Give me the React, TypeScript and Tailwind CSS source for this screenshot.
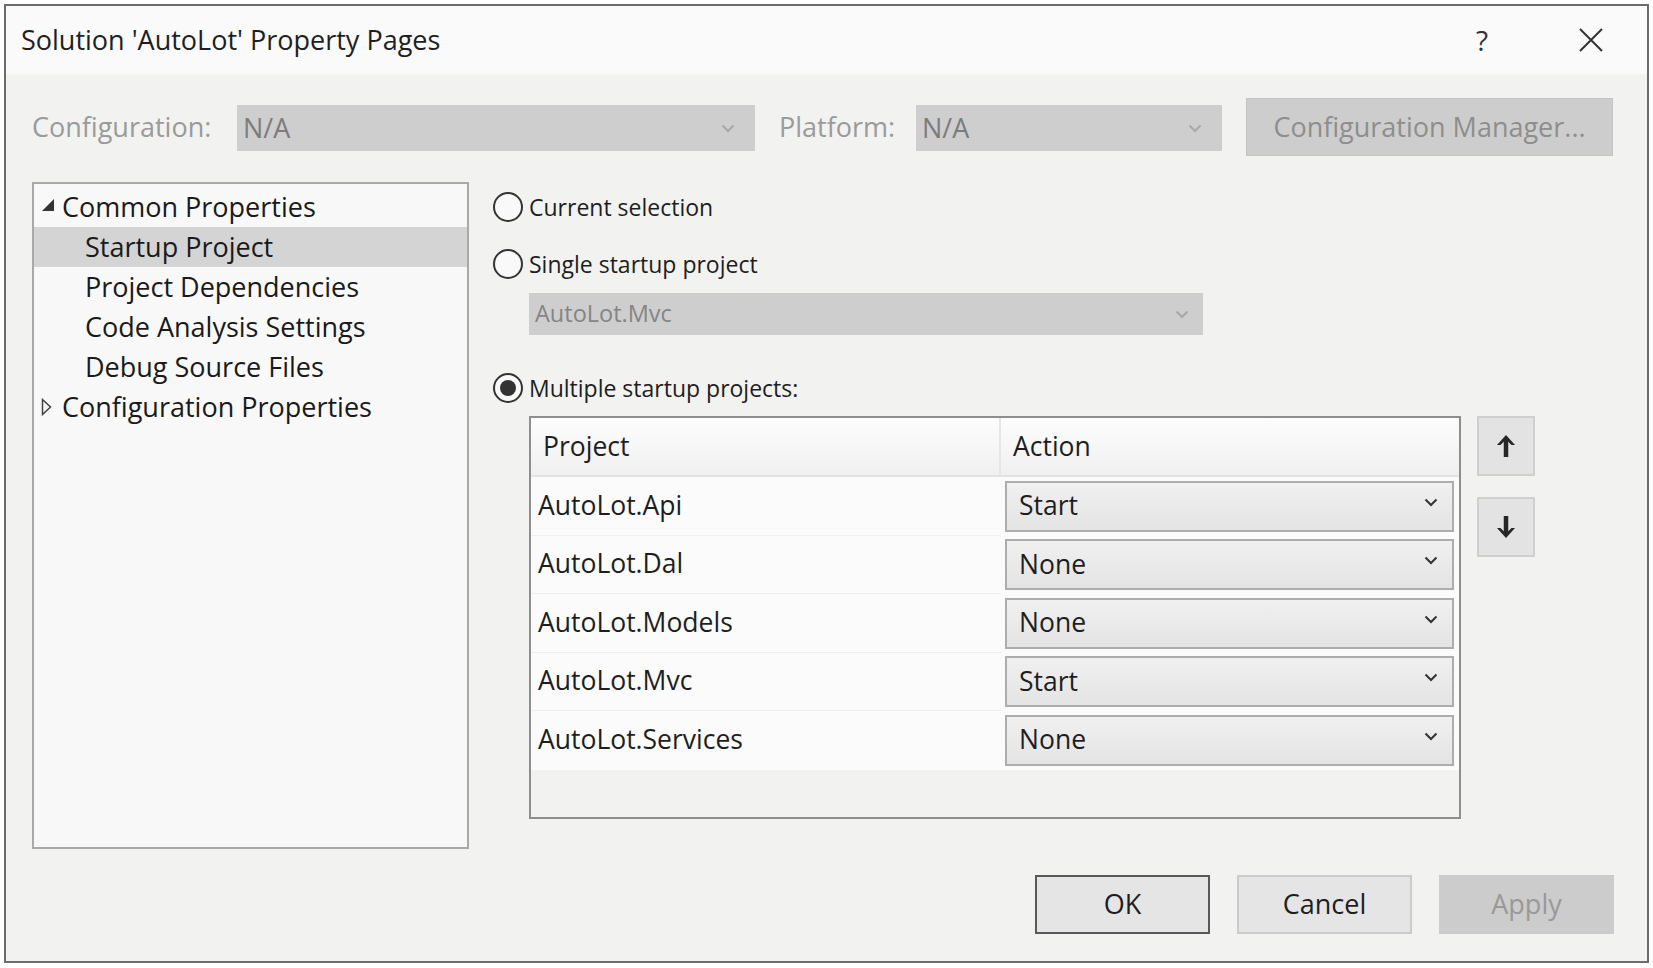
import React from 'react';

const font = { fontFamily: '"Open Sans", "Noto Sans", sans-serif' };

const Chevron = ({ className = '' }: { className?: string }) => (
  <svg width="14" height="9" viewBox="0 0 14 9" className={className}>
    <path d="M1.5 1.5 L7 7 L12.5 1.5" fill="none" stroke="currentColor" strokeWidth="2" />
  </svg>
);

const Radio = ({ checked, label }: { checked?: boolean; label: string }) => (
  <div className="flex items-center h-[36px]">
    <div className="w-[30px] h-[30px] rounded-full border-2 border-[#333] bg-[#f9f9f9] flex items-center justify-center">
      {checked && <div className="w-[16px] h-[16px] rounded-full bg-[#333]" />}
    </div>
    <span className="ml-[6px] text-[23px] text-[#1e1e1e]">{label}</span>
  </div>
);

const treeItems = [
  { label: 'Common Properties', kind: 'open' },
  { label: 'Startup Project', kind: 'child', selected: true },
  { label: 'Project Dependencies', kind: 'child' },
  { label: 'Code Analysis Settings', kind: 'child' },
  { label: 'Debug Source Files', kind: 'child' },
  { label: 'Configuration Properties', kind: 'closed' },
];

const projects = [
  { name: 'AutoLot.Api', action: 'Start' },
  { name: 'AutoLot.Dal', action: 'None' },
  { name: 'AutoLot.Models', action: 'None' },
  { name: 'AutoLot.Mvc', action: 'Start' },
  { name: 'AutoLot.Services', action: 'None' },
];

export default function App() {
  return (
    <div className="w-[1653px] h-[968px] bg-white pt-[4px] pl-[4px]" style={font}>
      <div className="w-[1645px] h-[959px] border-2 border-[#6b6b6b] bg-[#f2f2f1] flex flex-col">
        {/* Title bar */}
        <div className="h-[68px] bg-[#fafafa] flex items-center pl-[15px] shrink-0">
          <span className="text-[27px] text-[#1f1f1f]">Solution 'AutoLot' Property Pages</span>
          <span className="ml-auto text-[28px] text-[#333] w-[30px] text-center">?</span>
          <div className="ml-[79px] mr-[41px] w-[30px] h-[30px] flex items-center justify-center">
            <svg width="24" height="24" viewBox="0 0 24 24">
              <path d="M1 1 L23 23 M23 1 L1 23" stroke="#333" strokeWidth="2" fill="none" />
            </svg>
          </div>
        </div>

        {/* Configuration row */}
        <div className="flex items-center mt-[24px] pl-[26px] h-[58px]">
          <span className="w-[205px] text-[27px] text-[#9a9a9a]">Configuration:</span>
          <div className="mt-[2px] w-[518px] h-[46px] bg-[#cecece] flex items-center pl-[6px] pr-[20px]">
            <span className="text-[27px] text-[#7c7c7c]">N/A</span>
            <Chevron className="ml-auto text-[#a8a8a8]" />
          </div>
          <span className="ml-[24px] w-[137px] text-[27px] text-[#9a9a9a]">Platform:</span>
          <div className="mt-[2px] w-[306px] h-[46px] bg-[#cecece] flex items-center pl-[6px] pr-[20px]">
            <span className="text-[27px] text-[#7c7c7c]">N/A</span>
            <Chevron className="ml-auto text-[#a8a8a8]" />
          </div>
          <div className="ml-[24px] w-[367px] h-[58px] bg-[#cdcdcd] border border-[#c4c4c4] flex items-center justify-center">
            <span className="text-[27px] text-[#8e8e8e]">Configuration Manager...</span>
          </div>
        </div>

        {/* Main area */}
        <div className="flex mt-[26px] pl-[26px]">
          {/* Tree */}
          <div className="w-[437px] h-[667px] border-2 border-[#a9a9a9] bg-[#f8f8f8] pt-[3px]">
            {treeItems.map((it) => (
              <div
                key={it.label}
                className={`h-[40px] flex items-center ${it.selected ? 'bg-[#d4d4d4]' : ''}`}
              >
                {it.kind === 'child' ? (
                  <span className="pl-[51px] text-[27px] text-[#1a1a1a]">{it.label}</span>
                ) : (
                  <>
                    <span className="w-[28px] pl-[7px] flex items-center">
                      {it.kind === 'open' ? (
                        <svg width="14" height="14" viewBox="0 0 14 14" className="-mt-[4px]">
                          <path d="M13 1 L13 13 L1 13 Z" fill="#333" />
                        </svg>
                      ) : (
                        <svg width="11" height="18" viewBox="0 0 11 18">
                          <path d="M1.5 1.5 L9.5 9 L1.5 16.5 Z" fill="none" stroke="#444" strokeWidth="1.5" />
                        </svg>
                      )}
                    </span>
                    <span className="text-[27px] text-[#1a1a1a]">{it.label}</span>
                  </>
                )}
              </div>
            ))}
          </div>

          {/* Right panel */}
          <div className="ml-[24px] flex flex-col">
            <div className="mt-[7px]">
              <Radio label="Current selection" />
            </div>
            <div className="mt-[21px]">
              <Radio label="Single startup project" />
            </div>
            <div className="ml-[36px] mt-[11px] w-[674px] h-[42px] bg-[#cecece] flex items-center pl-[6px] pr-[14px]">
              <span className="text-[23.5px] text-[#858585]">AutoLot.Mvc</span>
              <Chevron className="ml-auto text-[#a8a8a8]" />
            </div>
            <div className="mt-[35px]">
              <Radio checked label="Multiple startup projects:" />
            </div>

            <div className="flex mt-[10px] ml-[36px]">
              {/* Grid */}
              <div className="w-[932px] h-[403px] border-2 border-[#8e8e8e] bg-[#f2f2f1] flex flex-col">
                <div className="h-[59px] flex bg-gradient-to-b from-[#fdfdfd] to-[#f0f0f0] border-b-2 border-[#e2e2e2]">
                  <div className="w-[470px] border-r-2 border-[#e6e6e6] flex items-center pl-[12px]">
                    <span className="text-[26.5px] text-[#1e1e1e]">Project</span>
                  </div>
                  <div className="flex-1 flex items-center pl-[12px]">
                    <span className="text-[26.5px] text-[#1e1e1e]">Action</span>
                  </div>
                </div>
                {projects.map((p, i) => (
                  <div key={p.name} className="h-[58.5px] flex">
                    <div
                      className={`w-[470px] flex items-center pl-[7px] bg-[#fbfbfb] ${i < projects.length - 1 ? 'border-b border-[#efefef]' : ''}`}
                    >
                      <span className="text-[26.5px] text-[#1e1e1e]">{p.name}</span>
                    </div>
                    <div className="flex-1 bg-[#fbfbfb] flex items-center pl-[4px] pr-[5px]">
                      <div className="w-full h-[51px] border-2 border-[#adadad] bg-gradient-to-b from-[#f0f0f0] to-[#e4e4e4] flex items-center pl-[12px] pr-[14px]">
                        <span className="text-[26.5px] text-[#1e1e1e]">{p.action}</span>
                        <Chevron className="ml-auto -mt-[8px] text-[#333]" />
                      </div>
                    </div>
                  </div>
                ))}
              </div>

              {/* Up / down */}
              <div className="ml-[16px] flex flex-col">
                <div className="w-[58px] h-[60px] bg-[#e3e3e3] border-2 border-[#cfcfcf] flex items-center justify-center">
                  <svg width="22" height="26" viewBox="0 0 22 26">
                    <path d="M11 24 V5" stroke="#262626" strokeWidth="4.5" fill="none" />
                    <path d="M2 12 L11 2 L20 12 L16.5 12 L11 6.5 L5.5 12 Z" fill="#262626" />
                  </svg>
                </div>
                <div className="mt-[21px] w-[58px] h-[60px] bg-[#e3e3e3] border-2 border-[#cfcfcf] flex items-center justify-center">
                  <svg width="22" height="26" viewBox="0 0 22 26">
                    <path d="M11 2 V21" stroke="#262626" strokeWidth="4.5" fill="none" />
                    <path d="M2 14 L11 24 L20 14 L16.5 14 L11 19.5 L5.5 14 Z" fill="#262626" />
                  </svg>
                </div>
              </div>
            </div>
          </div>
        </div>

        {/* Bottom buttons */}
        <div className="flex justify-end gap-[27px] mt-[26px] pr-[33px]">
          <div className="w-[175px] h-[59px] border-2 border-[#595959] bg-[#e5e5e5] flex items-center justify-center">
            <span className="text-[27px] text-[#1e1e1e]">OK</span>
          </div>
          <div className="w-[175px] h-[59px] border-2 border-[#cbcbcb] bg-[#e5e5e5] flex items-center justify-center">
            <span className="text-[27px] text-[#1e1e1e]">Cancel</span>
          </div>
          <div className="w-[175px] h-[59px] bg-[#cccccc] flex items-center justify-center">
            <span className="text-[27px] text-[#999]">Apply</span>
          </div>
        </div>
      </div>
    </div>
  );
}
